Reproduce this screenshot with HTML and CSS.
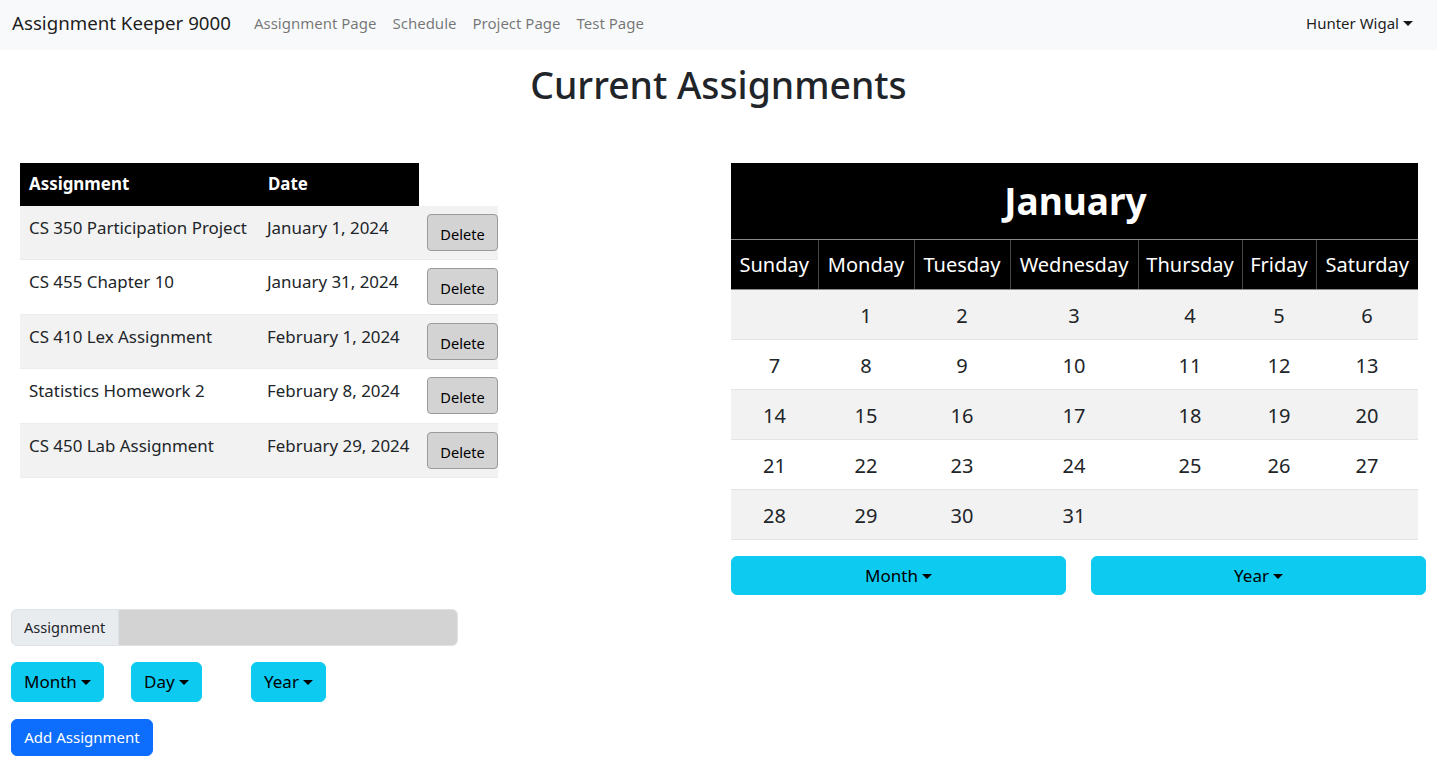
FILE: index.html
```html
<!DOCTYPE html>
<html lang="en">
<head>
<meta charset="utf-8">
<title>Assignment Keeper 9000</title>
<link rel="stylesheet" href="styles.css">
</head>
<body>
<nav class="navbar">
  <a class="brand" href="#">Assignment Keeper 9000</a>
  <ul class="nav-links">
    <li><a href="#">Assignment Page</a></li>
    <li><a href="#">Schedule</a></li>
    <li><a href="#">Project Page</a></li>
    <li><a href="#">Test Page</a></li>
  </ul>
  <a class="user" href="#">Hunter Wigal<span class="caret"></span></a>
</nav>

<main>
  <h1 class="title">Current Assignments</h1>
  <div class="content">
    <section class="left">
      <table class="assign-table">
        <colgroup><col class="c1"><col class="c2"><col class="c3"></colgroup>
        <thead>
          <tr><th>Assignment</th><th>Date</th></tr>
        </thead>
        <tbody>
          <tr><td>CS 350 Participation Project</td><td>January 1, 2024</td><td class="btn-cell"><button class="btn-delete">Delete</button></td></tr>
          <tr><td>CS 455 Chapter 10</td><td>January 31, 2024</td><td class="btn-cell"><button class="btn-delete">Delete</button></td></tr>
          <tr><td>CS 410 Lex Assignment</td><td>February 1, 2024</td><td class="btn-cell"><button class="btn-delete">Delete</button></td></tr>
          <tr><td>Statistics Homework 2</td><td>February 8, 2024</td><td class="btn-cell"><button class="btn-delete">Delete</button></td></tr>
          <tr><td>CS 450 Lab Assignment</td><td>February 29, 2024</td><td class="btn-cell"><button class="btn-delete">Delete</button></td></tr>
        </tbody>
      </table>

      <form class="add-form">
        <div class="input-group">
          <span class="input-label">Assignment</span>
          <input class="input-field" type="text">
        </div>
        <div class="date-pickers">
          <div class="picker"><button type="button" class="btn-info btn-sm-drop">Month<span class="caret"></span></button></div>
          <div class="picker"><button type="button" class="btn-info btn-sm-drop">Day<span class="caret"></span></button></div>
          <div class="picker"><button type="button" class="btn-info btn-sm-drop">Year<span class="caret"></span></button></div>
        </div>
        <button type="button" class="btn-primary">Add Assignment</button>
      </form>
    </section>

    <section class="right">
      <table class="calendar">
        <colgroup>
          <col style="width:87px"><col style="width:96px"><col style="width:96px"><col style="width:128px"><col style="width:104px"><col style="width:74px"><col style="width:102px">
        </colgroup>
        <thead>
          <tr><th colspan="7" class="month">January</th></tr>
          <tr class="days"><th>Sunday</th><th>Monday</th><th>Tuesday</th><th>Wednesday</th><th>Thursday</th><th>Friday</th><th>Saturday</th></tr>
        </thead>
        <tbody>
          <tr><td></td><td>1</td><td>2</td><td>3</td><td>4</td><td>5</td><td>6</td></tr>
          <tr><td>7</td><td>8</td><td>9</td><td>10</td><td>11</td><td>12</td><td>13</td></tr>
          <tr><td>14</td><td>15</td><td>16</td><td>17</td><td>18</td><td>19</td><td>20</td></tr>
          <tr><td>21</td><td>22</td><td>23</td><td>24</td><td>25</td><td>26</td><td>27</td></tr>
          <tr><td>28</td><td>29</td><td>30</td><td>31</td><td></td><td></td><td></td></tr>
        </tbody>
      </table>
      <div class="cal-controls">
        <button type="button" class="btn-info btn-wide">Month<span class="caret"></span></button>
        <button type="button" class="btn-info btn-wide">Year<span class="caret"></span></button>
      </div>
    </section>
  </div>
</main>
</body>
</html>
```

FILE: styles.css
```css
* { box-sizing: border-box; }

body {
  margin: 0;
  font-family: "Noto Sans", "Open Sans", sans-serif;
  font-size: 16px;
  line-height: 1.5;
  color: #212529;
  background: #fff;
}

a { text-decoration: none; }

.caret {
  display: inline-block;
  width: 0;
  height: 0;
  margin-left: 4px;
  vertical-align: 3px;
  border-top: 5px solid currentColor;
  border-left: 5px solid transparent;
  border-right: 5px solid transparent;
}

/* Navbar */
.navbar {
  height: 50px;
  background: #f8f9fa;
  display: flex;
  align-items: center;
  padding: 0 24px 4px 12px;
}
.brand {
  font-size: 18.7px;
  color: rgba(0,0,0,.9);
  margin-right: 16px;
}
.nav-links {
  list-style: none;
  margin: 0;
  padding: 0;
  display: flex;
  margin-left: -1px;
}
.nav-links a {
  display: block;
  padding: 8px 8px;
  font-size: 15px;
  color: rgba(0,0,0,.55);
}
.user {
  margin-left: auto;
  font-size: 15px;
  color: rgba(0,0,0,.9);
}

/* Title */
.title {
  margin: 11px 0 0;
  text-align: center;
  font-size: 37.3px;
  font-weight: 500;
  line-height: 48px;
}

.content {
  display: grid;
  grid-template-columns: 731px 1fr;
  margin-top: 54px;
}

/* Assignment table */
.left { padding-left: 11px; }
.assign-table {
  border-collapse: collapse;
  table-layout: fixed;
  width: 478px;
  margin-left: 9px;
  font-size: 16.9px;
}
.assign-table .c1 { width: 239px; }
.assign-table .c2 { width: 160px; }
.assign-table .c3 { width: 79px; }
.assign-table th {
  background: #000;
  color: #fff;
  text-align: left;
  font-weight: 700;
  padding: 9px 8px 10px 9px;
  line-height: 24px;
}
.assign-table td {
  padding: 8px 8px 8px 9px;
  vertical-align: top;
  line-height: 28px;
  border-bottom: 1px solid #ececec;
  white-space: nowrap;
}
.assign-table td:nth-child(2) { padding-left: 8px; }
.assign-table tbody tr:nth-child(odd) td { background: #f2f2f2; }
.assign-table td.btn-cell { padding: 8px 0 8.4px 8px; }
.btn-delete {
  display: block;
  width: 71px;
  height: 37px;
  margin-top: 0;
  padding: 3px 0 0;
  background: #d3d3d3;
  border: 1px solid #9a9a9a;
  border-radius: 4px;
  font-family: inherit;
  font-size: 14.6px;
  color: #000;
}

/* Form */
.add-form { margin-top: 131px; }
.input-group {
  display: flex;
  width: 447px;
  height: 37px;
}
.input-label {
  display: flex;
  align-items: center;
  padding: 0 12px;
  width: 108px;
  background: #e9ecef;
  border: 1px solid #dee2e6;
  border-radius: 6px 0 0 6px;
  font-size: 14.6px;
  color: #212529;
}
.input-field {
  flex: 1;
  background: #d3d3d3;
  border: 1px solid #dee2e6;
  border-left: none;
  border-radius: 0 6px 6px 0;
}
.date-pickers {
  display: grid;
  grid-template-columns: 120px 120px 120px;
  margin-top: 16px;
}
.btn-info {
  background: #0dcaf0;
  border: 1px solid #0dcaf0;
  border-radius: 6px;
  color: #000;
  font-family: inherit;
}
.btn-sm-drop {
  height: 40px;
  padding: 0 12px;
  font-size: 17px;
}
.btn-primary {
  display: block;
  margin-top: 17px;
  height: 37px;
  width: 142px;
  padding: 0;
  background: #0d6efd;
  border: 1px solid #0d6efd;
  border-radius: 6px;
  color: #fff;
  font-family: inherit;
  font-size: 15px;
}

/* Calendar */
.calendar {
  width: 687px;
  border-collapse: collapse;
  table-layout: fixed;
}
.calendar th { background: #000; color: #fff; font-weight: 400; }
.calendar .month {
  height: 76px;
  font-size: 37px;
  font-weight: 700;
  text-align: center;
  padding: 0 0 0 2px;
}
.calendar .days th {
  height: 50px;
  font-size: 20px;
  padding: 2px 0 0;
  text-align: center;
  border-top: 1px solid #8a8a8a;
  border-bottom: 1px solid #8a8a8a;
  border-left: 1px solid #444;
  white-space: nowrap;
}
.calendar .days th:first-child { border-left: none; }
.calendar td {
  height: 50px;
  text-align: center;
  font-size: 20px;
  padding: 3px 0 0;
  border-bottom: 1px solid #e4e4e4;
}
.calendar tbody tr:nth-child(odd) td { background: #f2f2f2; }

.cal-controls {
  display: grid;
  grid-template-columns: 335px 335px;
  column-gap: 25px;
  margin-top: 16px;
}
.btn-wide {
  height: 39px;
  font-size: 17px;
}
```
